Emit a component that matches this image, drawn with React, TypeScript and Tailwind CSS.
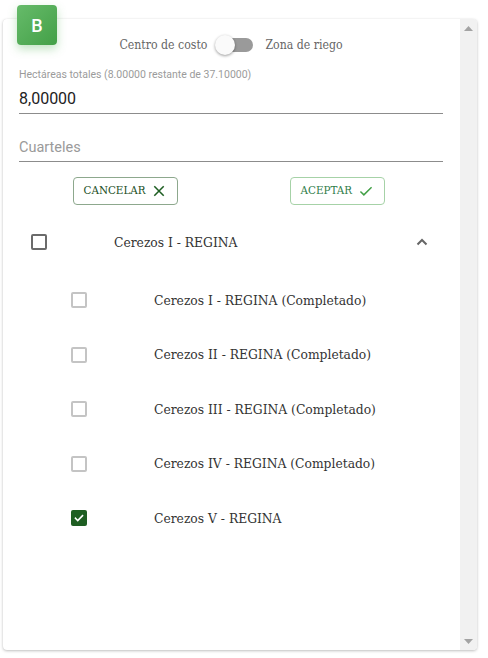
import React from "react";

const slab = { fontFamily: '"Roboto Slab", "DejaVu Serif", serif', fontStretch: "condensed" as const };

function Box({ checked, dark }: { checked?: boolean; dark?: boolean }) {
  if (checked) {
    return (
      <div className="w-4 h-4 rounded-[2px] bg-[#1e5e22] flex items-center justify-center">
        <svg width="12" height="12" viewBox="0 0 24 24" fill="none" stroke="white" strokeWidth="3.2" strokeLinecap="square">
          <path d="M5 12.5l4.5 4.5L19 7.5" />
        </svg>
      </div>
    );
  }
  return (
    <div
      className={
        "w-4 h-4 rounded-[2px] border-2 " +
        (dark ? "border-[#6b6b6b]" : "border-[#c4c4c4]")
      }
    />
  );
}

const children = [
  { label: "Cerezos I - REGINA (Completado)" },
  { label: "Cerezos II - REGINA (Completado)" },
  { label: "Cerezos III - REGINA (Completado)" },
  { label: "Cerezos IV - REGINA (Completado)" },
  { label: "Cerezos V - REGINA", checked: true },
];

export default function App() {
  return (
    <div className="relative w-[488px] h-[658px] bg-white" style={{ fontFamily: "Roboto, sans-serif" }}>
      <div className="ml-[3px] pt-[19px]">
        <div className="w-[474px] h-[631px] rounded-[4px] bg-white shadow-[0_1px_3px_rgba(0,0,0,0.25),0_0_1px_rgba(0,0,0,0.08)] overflow-hidden flex">
          <div className="flex-1 pl-4">
            <div className="w-[424px]">
              {/* toggle row */}
              <div className="pt-4 h-[36px] flex items-center justify-center text-[12.2px] text-[#666]" style={slab}>
                <span>Centro de costo</span>
                <div className="relative ml-2 mr-3 w-[38px] h-5 flex items-center">
                  <div className="absolute left-[4px] right-0 h-[14px] rounded-full bg-[#9a9a9a]" />
                  <div className="absolute left-0 w-5 h-5 rounded-full bg-[#fafafa] shadow-[0_1px_3px_rgba(0,0,0,0.4)]" />
                </div>
                <span>Zona de riego</span>
              </div>
              {/* hectareas */}
              <div className="mt-[13px] h-[13px] leading-[13px] text-[10.5px] text-[#9b9b9b]">
                Hectáreas totales (8.00000 restante de 37.10000)
              </div>
              <div className="mt-[4px] h-[29px] flex items-center text-[16px] text-[#222] border-b border-[#8c8c8c]">
                8,00000
              </div>
              <div className="mt-[20px] h-[28px] flex items-center text-[14.5px] text-[#9a9a9a] border-b border-[#8c8c8c]">
                Cuarteles
              </div>
              {/* buttons */}
              <div className="mt-[15px] grid grid-cols-2" style={slab}>
                <div className="flex justify-center">
                  <button className="h-[28px] w-[105px] pl-[10px] pr-[12px] flex items-center justify-between rounded-[4px] border border-[#8da88d] text-[11.5px] font-medium text-[#1c4f1f]">
                    CANCELAR
                    <svg width="12" height="12" viewBox="0 0 14 14" stroke="#1e5e22" strokeWidth="1.8">
                      <path d="M1.5 1.5l11 11M12.5 1.5l-11 11" />
                    </svg>
                  </button>
                </div>
                <div className="flex justify-center">
                  <button className="h-[28px] w-[95px] pl-[10px] pr-[11px] flex items-center justify-between rounded-[4px] border border-[#a6d2a7] text-[11.5px] font-medium text-[#2f7d4a]">
                    ACEPTAR
                    <svg width="14" height="12" viewBox="0 0 16 14" fill="none" stroke="#43a047" strokeWidth="1.7">
                      <path d="M1.5 7.5l4 4L14.5 2.5" />
                    </svg>
                  </button>
                </div>
              </div>
              {/* parent row */}
              <div className="mt-[13px] h-[48px] flex items-center text-[13.7px] text-[#333]" style={slab}>
                <div className="ml-[12px]">
                  <Box dark />
                </div>
                <span className="ml-[67px]">Cerezos I - REGINA</span>
                <svg className="ml-auto mr-[15px]" width="12" height="8" viewBox="0 0 12 8" fill="none" stroke="#666" strokeWidth="2">
                  <path d="M1.5 6.5L6 2l4.5 4.5" />
                </svg>
              </div>
              <div className="pt-[7px]">
                {children.map((c) => (
                  <div key={c.label} className="h-[54.5px] flex items-center text-[13.7px] text-[#333]" style={slab}>
                    <div className="ml-[52px]">
                      <Box checked={c.checked} />
                    </div>
                    <span className="ml-[67px]">{c.label}</span>
                  </div>
                ))}
              </div>
            </div>
          </div>
          {/* scrollbar */}
          <div className="w-[17px] bg-[#f1f1f1] flex flex-col items-center justify-between pt-[7px] pb-[6px]">
            <svg width="9" height="5" viewBox="0 0 9 5">
              <path d="M0 5L4.5 0 9 5z" fill="#a3a3a3" />
            </svg>
            <svg width="9" height="5" viewBox="0 0 9 5">
              <path d="M0 0L4.5 5 9 0z" fill="#a3a3a3" />
            </svg>
          </div>
        </div>
      </div>
      <div className="absolute left-[17px] top-[5px] w-10 h-10 rounded-[4px] bg-gradient-to-br from-[#66bb6a] to-[#43a047] shadow-[0_4px_10px_rgba(76,175,80,0.35)] flex items-center justify-center text-white text-[18px] font-medium">
        B
      </div>
    </div>
  );
}
